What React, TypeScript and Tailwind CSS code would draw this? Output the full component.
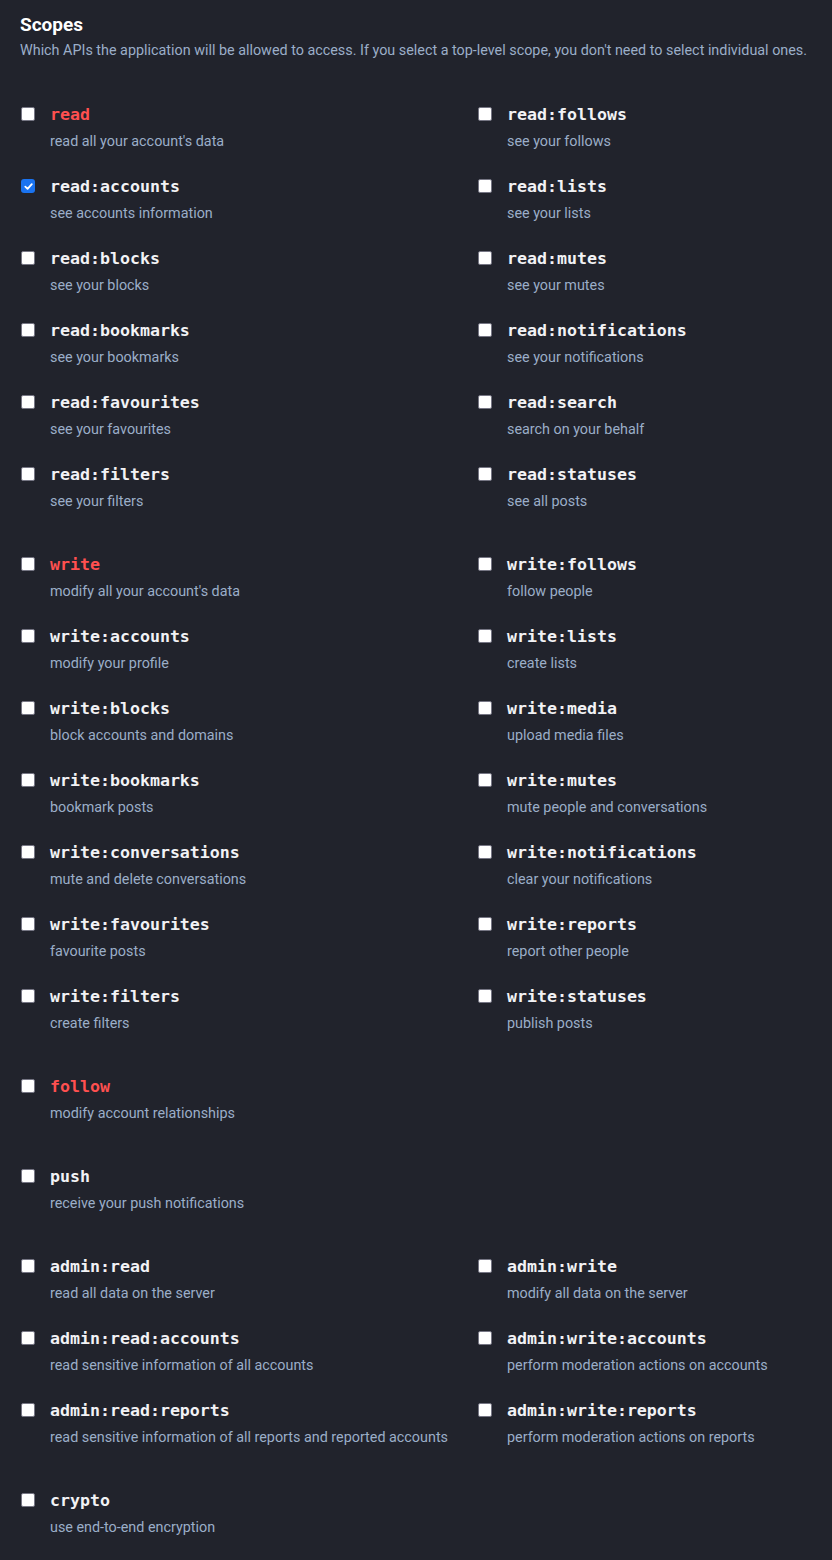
type Scope = { name: string; desc: string; top?: boolean; checked?: boolean };

const groups: Scope[][] = [
  [
    { name: 'read', desc: "read all your account's data", top: true },
    { name: 'read:follows', desc: 'see your follows' },
    { name: 'read:accounts', desc: 'see accounts information', checked: true },
    { name: 'read:lists', desc: 'see your lists' },
    { name: 'read:blocks', desc: 'see your blocks' },
    { name: 'read:mutes', desc: 'see your mutes' },
    { name: 'read:bookmarks', desc: 'see your bookmarks' },
    { name: 'read:notifications', desc: 'see your notifications' },
    { name: 'read:favourites', desc: 'see your favourites' },
    { name: 'read:search', desc: 'search on your behalf' },
    { name: 'read:filters', desc: 'see your filters' },
    { name: 'read:statuses', desc: 'see all posts' },
  ],
  [
    { name: 'write', desc: "modify all your account's data", top: true },
    { name: 'write:follows', desc: 'follow people' },
    { name: 'write:accounts', desc: 'modify your profile' },
    { name: 'write:lists', desc: 'create lists' },
    { name: 'write:blocks', desc: 'block accounts and domains' },
    { name: 'write:media', desc: 'upload media files' },
    { name: 'write:bookmarks', desc: 'bookmark posts' },
    { name: 'write:mutes', desc: 'mute people and conversations' },
    { name: 'write:conversations', desc: 'mute and delete conversations' },
    { name: 'write:notifications', desc: 'clear your notifications' },
    { name: 'write:favourites', desc: 'favourite posts' },
    { name: 'write:reports', desc: 'report other people' },
    { name: 'write:filters', desc: 'create filters' },
    { name: 'write:statuses', desc: 'publish posts' },
  ],
  [{ name: 'follow', desc: 'modify account relationships', top: true }],
  [{ name: 'push', desc: 'receive your push notifications' }],
  [
    { name: 'admin:read', desc: 'read all data on the server' },
    { name: 'admin:write', desc: 'modify all data on the server' },
    { name: 'admin:read:accounts', desc: 'read sensitive information of all accounts' },
    { name: 'admin:write:accounts', desc: 'perform moderation actions on accounts' },
    { name: 'admin:read:reports', desc: 'read sensitive information of all reports and reported accounts' },
    { name: 'admin:write:reports', desc: 'perform moderation actions on reports' },
  ],
  [{ name: 'crypto', desc: 'use end-to-end encryption' }],
];

function Box({ checked }: { checked?: boolean }) {
  if (checked) {
    return (
      <span className="mt-1 flex h-[14px] w-[14px] shrink-0 items-center justify-center rounded-[3px] bg-[#1a73f0]">
        <svg viewBox="0 0 12 12" className="h-[11px] w-[11px]" fill="none" stroke="white" strokeWidth="2" strokeLinecap="round" strokeLinejoin="round">
          <path d="M2.5 6.2 L5 8.6 L9.6 3.4" />
        </svg>
      </span>
    );
  }
  return <span className="mt-1 block h-[14px] w-[14px] shrink-0 rounded-[2px] border-[1.5px] border-[#767684] bg-white" />;
}

function Row({ s }: { s: Scope }) {
  return (
    <label className="flex gap-[15px] pl-px">
      <Box checked={s.checked} />
      <div>
        <div
          className={`font-['DejaVu_Sans_Mono',monospace] text-[16.6px] font-bold leading-6 ${
            s.top ? 'text-[#ff5050]' : 'text-[#f2f2f5]'
          }`}
        >
          {s.name}
        </div>
        <div className="mt-[5px] text-[14.35px] leading-5 text-[#9baec8]">{s.desc}</div>
      </div>
    </label>
  );
}

export default function App() {
  return (
    <div className="min-h-screen bg-[#21232c] px-5 pt-[13px] pb-6 font-['Roboto',sans-serif]">
      <h2 className="text-[19px] font-bold leading-6 text-white">Scopes</h2>
      <p className="mt-1 text-[14.35px] leading-5 text-[#9baec8]">
        Which APIs the application will be allowed to access. If you select a top-level scope, you don't need to select
        individual ones.
      </p>
      <div className="mt-[42px] flex flex-col gap-[41px]">
        {groups.map((g, i) => (
          <div key={i} className="grid grid-cols-[457px_1fr] gap-y-[23px]">
            {g.map((s) => (
              <Row key={s.name} s={s} />
            ))}
          </div>
        ))}
      </div>
    </div>
  );
}
